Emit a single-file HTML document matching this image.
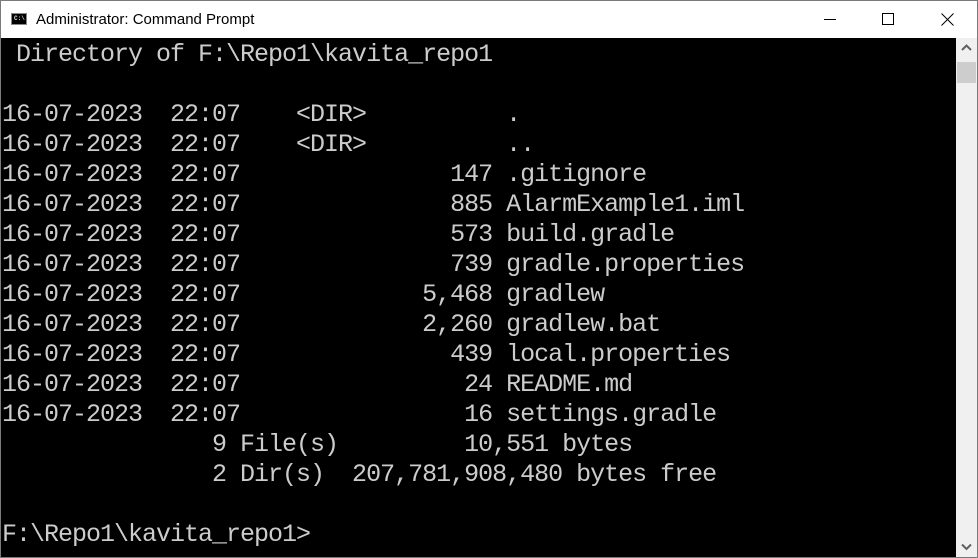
<!DOCTYPE html>
<html><head><meta charset="utf-8"><style>
html,body{margin:0;padding:0;width:978px;height:558px;overflow:hidden;background:#fff;}
.win{position:absolute;left:0;top:0;width:976px;height:556px;border:1px solid #7a7a7a;background:#fff;}
.title{position:absolute;left:0;top:0;width:976px;height:37px;background:#fff;}
.title .t{position:absolute;left:35px;top:10px;font:15px "Liberation Sans",sans-serif;color:#000;}
.icon{position:absolute;left:10px;top:12px;width:16px;height:12px;background:#000;border:1px solid #888;box-sizing:border-box;}
.icon span{position:absolute;left:2px;top:1px;font:bold 6px "Liberation Mono",monospace;color:#ddd;}
.term{position:absolute;left:0;top:37px;width:955px;height:519px;background:#000;}
pre{margin:0;position:absolute;left:1px;top:2px;font-family:"Liberation Mono",monospace;font-size:25px;letter-spacing:-1px;line-height:30px;color:#cccccc;}
.sb{position:absolute;left:955px;top:37px;width:21px;height:519px;background:#f0f0f0;}
.thumb{position:absolute;left:1px;top:24px;width:19px;height:21px;background:#cdcdcd;}
</style></head><body>
<div class="win">
<div class="title">
<div class="icon"><span>C:\</span></div>
<div class="t">Administrator: Command Prompt</div>
<svg style="position:absolute;left:823px;top:12px" width="14" height="14"><line x1="0" y1="6.5" x2="12" y2="6.5" stroke="#000" stroke-width="1"/></svg>
<svg style="position:absolute;left:881px;top:12px" width="14" height="14"><rect x="0.5" y="0.5" width="11" height="11" fill="none" stroke="#000"/></svg>
<svg style="position:absolute;left:940px;top:12px" width="14" height="14"><path d="M0.5 0.5L12.5 12.5M12.5 0.5L0.5 12.5" stroke="#000"/></svg>
</div>
<div class="term"><pre> Directory of F:\Repo1\kavita_repo1

16-07-2023  22:07    &lt;DIR&gt;          .
16-07-2023  22:07    &lt;DIR&gt;          ..
16-07-2023  22:07               147 .gitignore
16-07-2023  22:07               885 AlarmExample1.iml
16-07-2023  22:07               573 build.gradle
16-07-2023  22:07               739 gradle.properties
16-07-2023  22:07             5,468 gradlew
16-07-2023  22:07             2,260 gradlew.bat
16-07-2023  22:07               439 local.properties
16-07-2023  22:07                24 README.md
16-07-2023  22:07                16 settings.gradle
               9 File(s)         10,551 bytes
               2 Dir(s)  207,781,908,480 bytes free

F:\Repo1\kavita_repo1&gt;</pre></div>
<div class="sb">
<svg style="position:absolute;left:5px;top:6px" width="11" height="8"><path d="M1 6L5.5 1.5L10 6" stroke="#606060" stroke-width="2" fill="none"/></svg>
<div class="thumb"></div>
<svg style="position:absolute;left:5px;top:505px" width="11" height="8"><path d="M1 1.5L5.5 6L10 1.5" stroke="#606060" stroke-width="2" fill="none"/></svg>
</div>
</div>
</body></html>
